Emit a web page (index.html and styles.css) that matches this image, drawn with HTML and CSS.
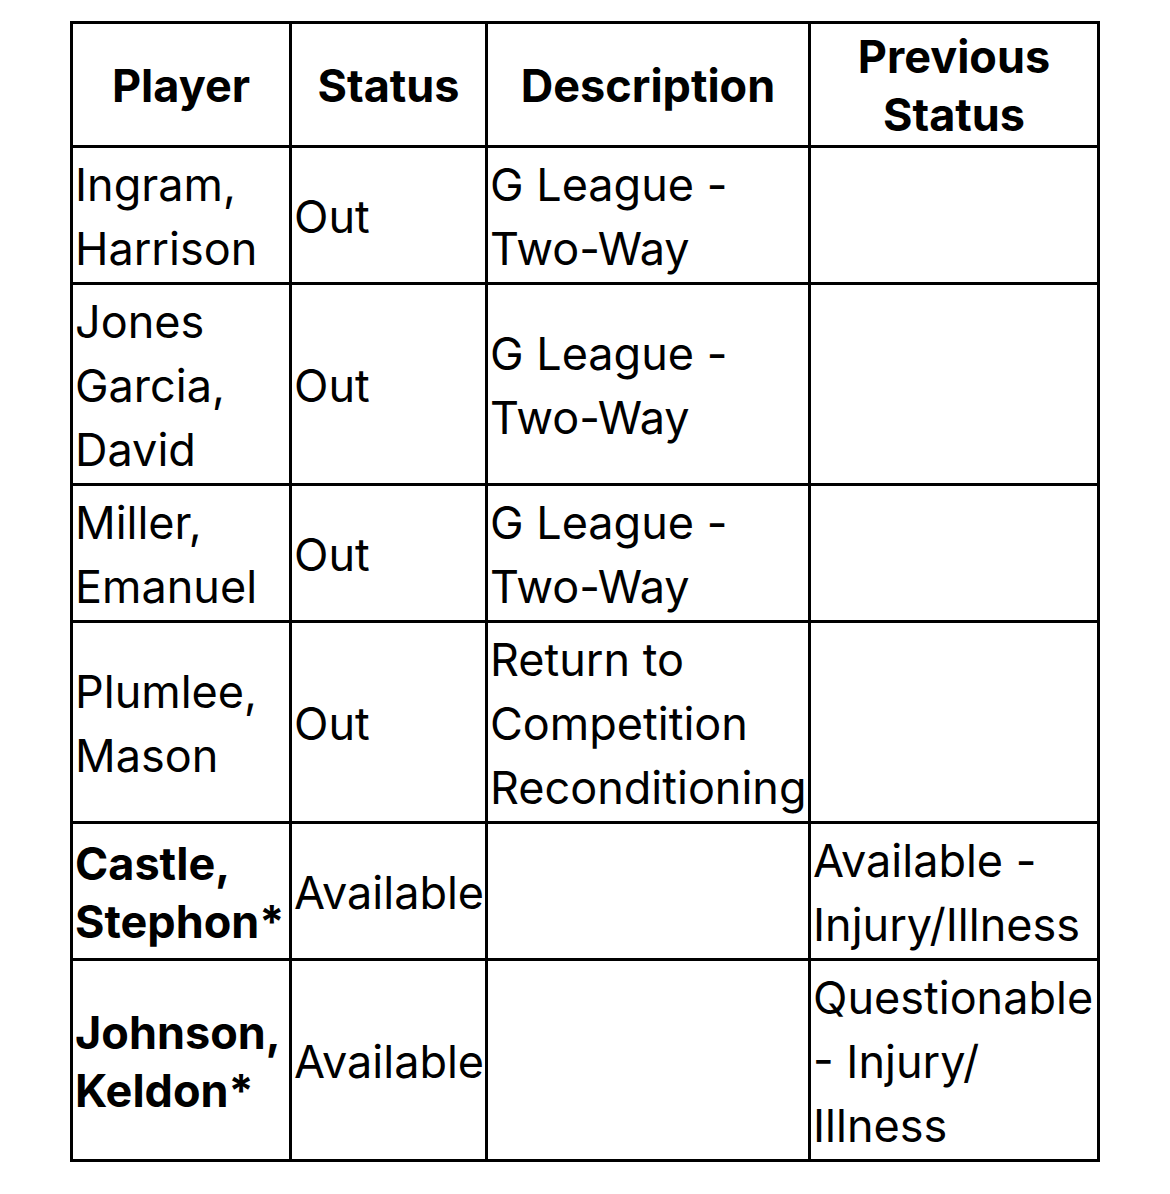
FILE: index.html
```html
<!DOCTYPE html>
<html>
<head>
<meta charset="utf-8">
<link rel="stylesheet" href="styles.css">
</head>
<body>
<table class="report">
  <colgroup>
    <col class="c-player">
    <col class="c-status">
    <col class="c-desc">
    <col class="c-prev">
  </colgroup>
  <thead>
    <tr>
      <th>Player</th>
      <th>Status</th>
      <th>Description</th>
      <th>Previous Status</th>
    </tr>
  </thead>
  <tbody>
    <tr>
      <td>Ingram, Harrison</td>
      <td>Out</td>
      <td>G League - Two-Way</td>
      <td></td>
    </tr>
    <tr>
      <td>Jones Garcia, David</td>
      <td>Out</td>
      <td>G League - Two-Way</td>
      <td></td>
    </tr>
    <tr>
      <td>Miller, Emanuel</td>
      <td>Out</td>
      <td>G League - Two-Way</td>
      <td></td>
    </tr>
    <tr>
      <td>Plumlee, Mason</td>
      <td>Out</td>
      <td>Return to Competition Reconditioning</td>
      <td></td>
    </tr>
    <tr>
      <td class="bold">Castle, Stephon*</td>
      <td>Available</td>
      <td></td>
      <td>Available - Injury/Illness</td>
    </tr>
    <tr>
      <td class="bold">Johnson, Keldon*</td>
      <td>Available</td>
      <td></td>
      <td>Questionable - Injury/ Illness</td>
    </tr>
  </tbody>
</table>
</body>
</html>
```

FILE: styles.css
```css
html, body {
  margin: 0;
  padding: 0;
  background: #ffffff;
}

body {
  font-family: "Inter", "Liberation Sans", sans-serif;
  color: #000000;
}

.report {
  margin: 21px 0 0 70px;
  width: 1027px;
  border-collapse: collapse;
  table-layout: fixed;
  border: 3px solid #000;
}

.c-player { width: 219px; }
.c-status { width: 196px; }
.c-desc { width: 323px; }
.c-prev { width: 289px; }

.report th,
.report td {
  border: 3px solid #000;
  vertical-align: middle;
  font-size: 45px;
  padding: 5px 1px 1px 2px;
  overflow: visible;
}

.report th {
  font-weight: 700;
  text-align: center;
  line-height: 58px;
  padding: 4px 8px 1px;
}

.report td {
  text-align: left;
  font-weight: 400;
  line-height: 64px;
}

.report td.bold {
  font-weight: 700;
  line-height: 58px;
}
```
